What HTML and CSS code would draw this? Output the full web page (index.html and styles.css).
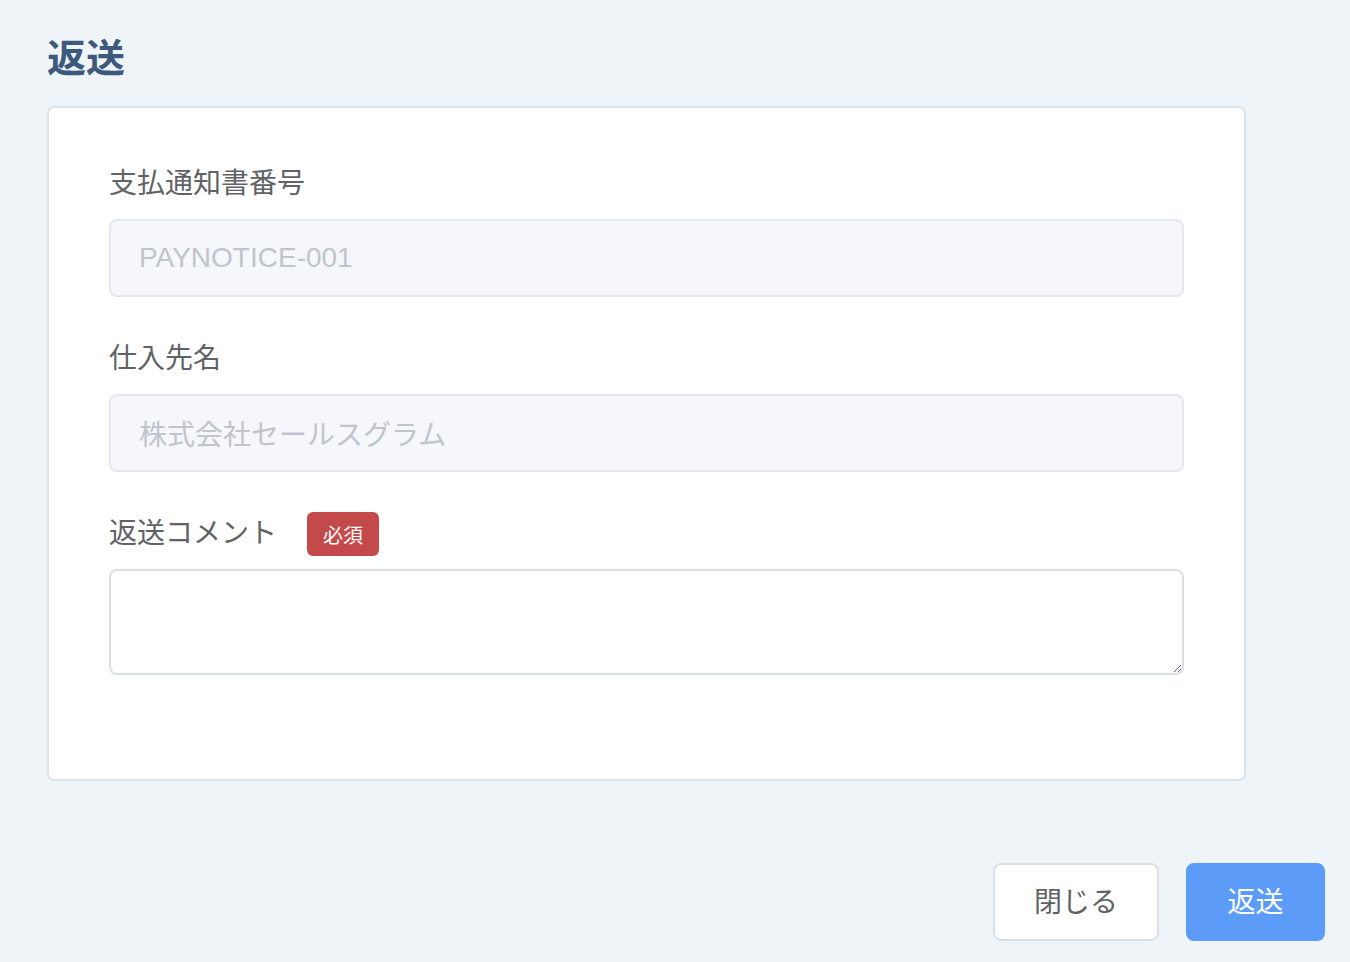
FILE: index.html
```html
<!DOCTYPE html>
<html lang="ja">
<head>
<meta charset="utf-8">
<title>返送</title>
<link rel="stylesheet" href="styles.css">
</head>
<body>
<div class="page">
  <h1 class="title">返送</h1>
  <div class="card">
    <div class="form-item">
      <div class="label-row"><label class="label">支払通知書番号</label></div>
      <input class="input" type="text" value="PAYNOTICE-001" disabled>
    </div>
    <div class="form-item">
      <div class="label-row"><label class="label">仕入先名</label></div>
      <input class="input" type="text" value="株式会社セールスグラム" disabled>
    </div>
    <div class="form-item">
      <div class="label-row"><label class="label">返送コメント</label><span class="badge">必須</span></div>
      <textarea class="textarea"></textarea>
    </div>
  </div>
  <div class="actions">
    <button class="btn btn-default" type="button">閉じる</button>
    <button class="btn btn-primary" type="button">返送</button>
  </div>
</div>
</body>
</html>
```

FILE: styles.css
```css
* { box-sizing: border-box; }
html, body {
  margin: 0;
  padding: 0;
  background: #eff4f9;
}
body {
  font-family: "Liberation Sans", "Noto Sans CJK JP", sans-serif;
  color: #606266;
}
.page {
  padding: 32px 25px 0 47px;
}
.title {
  margin: 0 0 20px 0;
  font-size: 39px;
  line-height: 54px;
  font-weight: 700;
  color: #3d5a7c;
}
.card {
  width: 1199px;
  background: #ffffff;
  border: 2px solid #dfe2e8;
  border-radius: 7px;
  padding: 54px 60px 104px 60px;
}
.form-item + .form-item {
  margin-top: 40px;
}
.label-row {
  display: flex;
  align-items: center;
  height: 44px;
  margin-bottom: 13px;
}
.label {
  font-size: 28px;
  line-height: 40px;
  color: #606266;
}
.badge {
  margin-left: 30px;
  height: 44px;
  padding: 0 16px;
  display: inline-flex;
  align-items: center;
  background: #c4494b;
  color: #ffffff;
  font-size: 20px;
  border-radius: 6px;
}
.input {
  display: block;
  width: 100%;
  height: 78px;
  padding: 0 28px;
  border: 2px solid #e4e7ed;
  border-radius: 8px;
  background: #f5f7fa;
  font-family: "Liberation Sans", "Noto Sans CJK JP", sans-serif;
  font-size: 28px;
  color: #c0c4cc;
  -webkit-text-fill-color: #c0c4cc;
  opacity: 1;
  outline: none;
}
.textarea {
  display: block;
  width: 100%;
  height: 106px;
  padding: 10px 28px;
  border: 2px solid #dcdfe6;
  border-radius: 8px;
  background: #ffffff;
  font-family: "Liberation Sans", "Noto Sans CJK JP", sans-serif;
  font-size: 28px;
  color: #606266;
  resize: vertical;
  outline: none;
}
.actions {
  display: flex;
  justify-content: flex-end;
  gap: 27px;
  margin-top: 82px;
}
.btn {
  height: 78px;
  padding: 0 0 4px 0;
  white-space: nowrap;
  border-radius: 8px;
  font-family: "Liberation Sans", "Noto Sans CJK JP", sans-serif;
  font-size: 28px;
  cursor: pointer;
}
.btn-default {
  width: 166px;
  background: #ffffff;
  border: 2px solid #dcdfe6;
  color: #606266;
}
.btn-primary {
  width: 139px;
  background: #5c9cf8;
  border: 2px solid #5c9cf8;
  color: #ffffff;
}
```
